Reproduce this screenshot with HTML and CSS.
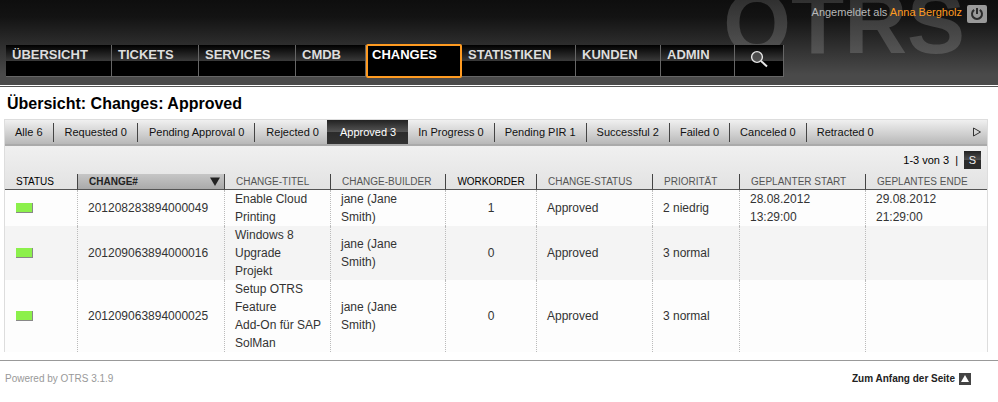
FILE: index.html
```html
<!DOCTYPE html>
<html lang="de">
<head>
<meta charset="utf-8">
<title>Übersicht: Changes: Approved</title>
<link rel="stylesheet" href="styles.css">
</head>
<body>
<header class="header" id="top">
  <div class="logo" aria-hidden="true">OTRS</div>
  <div class="session">
    <span>Angemeldet als <a href="#profile">Anna Bergholz</a></span>
    <a class="logout" href="#logout" aria-label="Abmelden">
      <svg width="14" height="14" viewBox="0 0 14 14" fill="none" stroke="#2b2b2b" stroke-width="2"><path d="M4.200 2.800a5 5 0 1 0 5.600 0M7 1v6"/></svg>
    </a>
  </div>
  <nav class="nav" aria-label="Hauptnavigation">
    <a href="#dashboard">ÜBERSICHT</a>
    <a href="#tickets">TICKETS</a>
    <a href="#services">SERVICES</a>
    <a href="#cmdb">CMDB</a>
    <a href="#changes" class="selected">CHANGES</a>
    <a href="#stats">STATISTIKEN</a>
    <a href="#customers">KUNDEN</a>
    <a href="#admin">ADMIN</a>
    <button type="button" aria-label="Suche">
      <svg width="18" height="18" viewBox="0 0 18 18" fill="none" stroke="#e6e6e6"><circle cx="7" cy="7" r="5.400" stroke-width="1.400" fill="#666" fill-opacity=".6"/><path d="M11 11l6 5.500" stroke-width="2"/></svg>
    </button>
  </nav>
</header>
<main class="content">
  <h1>Übersicht: Changes: Approved</h1>
  <section class="overview">
    <div class="tabs">
      <ul>
        <li><a href="#all">Alle 6</a></li>
        <li><a href="#requested">Requested 0</a></li>
        <li><a href="#pending">Pending Approval 0</a></li>
        <li><a href="#rejected">Rejected 0</a></li>
        <li class="active"><a href="#approved">Approved 3</a></li>
        <li><a href="#progress">In Progress 0</a></li>
        <li><a href="#pir">Pending PIR 1</a></li>
        <li><a href="#successful">Successful 2</a></li>
        <li><a href="#failed">Failed 0</a></li>
        <li><a href="#canceled">Canceled 0</a></li>
        <li><a href="#retracted">Retracted 0</a></li>
      </ul>
      <button class="more" type="button" aria-label="Weitere Filter">
        <svg width="10" height="10" viewBox="0 0 10 10" fill="none" stroke="#333"><path d="M1.500 1v8L8.500 5z"/></svg>
      </button>
    </div>
    <div class="tools">
      <span>1-3 von 3</span><span class="bar">|</span>
      <button type="button" class="size">S</button>
    </div>
    <table>
      <colgroup><col class="c-status"><col class="c-number"><col class="c-title"><col class="c-builder"><col class="c-order"><col class="c-state"><col class="c-prio"><col class="c-start"><col></colgroup>
      <thead>
        <tr>
          <th class="plain">STATUS</th>
          <th class="sorted" aria-sort="descending"><div>CHANGE#<svg width="10" height="9" viewBox="0 0 10 9" fill="#222"><path d="M0 .500h10L5 9z"/></svg></div></th>
          <th>CHANGE-TITEL</th>
          <th>CHANGE-BUILDER</th>
          <th class="plain center">WORKORDER</th>
          <th>CHANGE-STATUS</th>
          <th>PRIORITÄT</th>
          <th>GEPLANTER START</th>
          <th>GEPLANTES ENDE</th>
        </tr>
      </thead>
      <tbody>
        <tr>
          <td><span class="flag"></span></td><td>201208283894000049</td><td>Enable Cloud<br>Printing</td><td>jane (Jane<br>Smith)</td><td class="center">1</td><td>Approved</td><td>2 niedrig</td><td>28.08.2012<br>13:29:00</td><td>29.08.2012<br>21:29:00</td>
        </tr>
        <tr>
          <td><span class="flag"></span></td><td>201209063894000016</td><td>Windows 8<br>Upgrade<br>Projekt</td><td>jane (Jane<br>Smith)</td><td class="center">0</td><td>Approved</td><td>3 normal</td><td></td><td></td>
        </tr>
        <tr>
          <td><span class="flag"></span></td><td>201209063894000025</td><td>Setup OTRS<br>Feature<br>Add-On für SAP<br>SolMan</td><td>jane (Jane<br>Smith)</td><td class="center">0</td><td>Approved</td><td>3 normal</td><td></td><td></td>
        </tr>
      </tbody>
    </table>
  </section>
</main>
<footer class="footer">
  <a class="powered" href="#about">Powered by OTRS 3.1.9</a>
  <a class="totop" href="#top">Zum Anfang der Seite
    <svg width="12" height="12" viewBox="0 0 12 12"><path fill="#444" d="M0 0h12v12H0z"/><path fill="#fff" d="M6 2l4 7H2z"/></svg>
  </a>
</footer>
</body>
</html>
```

FILE: styles.css
```css
* { box-sizing: border-box; }
body {
  margin: 0;
  background: #fff;
  color: #333;
  font: 12px/18px "Liberation Sans", Arial, sans-serif;
}
a { color: inherit; text-decoration: none; }
button { border: 0; padding: 0; font: inherit; cursor: pointer; }
svg { display: block; }

.header {
  position: relative;
  overflow: hidden;
  display: flex;
  flex-direction: column;
  justify-content: space-between;
  height: 85px;
  padding: 4px 11px 8px 6px;
  background: linear-gradient(#0e0e0e, #131313 20%, #4a4a4a 88%);
}
.logo {
  position: absolute;
  top: -24px;
  right: 33px;
  background: linear-gradient(#303030 26%, #565656 84%);
  background-clip: text;
  color: transparent;
  font-size: 87px;
  font-weight: bold;
  line-height: 94px;
}
.session {
  position: relative;
  display: flex;
  justify-content: flex-end;
  gap: 5px;
  color: #b8b8b8;
  font-size: 11px;
  line-height: 16px;
}
.session span a { color: #ff9b21; }
.logout {
  display: grid;
  place-items: center;
  width: 20px;
  height: 18px;
  margin-top: 1px;
  border-radius: 2px;
  background: #999;
}
.nav {
  position: relative;
  display: grid;
  grid-template-columns: 106px 87px 97px 70px 96px 114px 85px 74px 49px;
  height: 32px;
}
.nav > * {
  padding: 1px 6px;
  border: solid #666;
  border-width: 0 1px 1px 0;
  background: linear-gradient(#000, #3a3a3a) 0 0 / 100% 16px no-repeat #000;
  color: #ddd;
  font-size: 13px;
  font-weight: bold;
}
.nav .selected {
  margin: -1px 0;
  padding: 0 4px;
  border: 2px solid #ff9b21;
  border-radius: 2px;
  background: #000;
  color: #fff;
}
.nav button { display: grid; justify-content: center; padding-top: 5px; align-content: start; }

.content {
  margin-top: 1px;
  padding: 0 10px 8px 4px;
  border-top: 1px solid #555;
}
h1 {
  margin: 0;
  padding: 7px 3px 5px;
  color: #000;
  font-size: 16px;
  line-height: 20px;
}
.overview {
  border: 1px solid #ddd;
  border-bottom: 0;
  background: linear-gradient(#f0f0f0, #e2e2e2) 0 26px / 100% 44px no-repeat;
}
.tabs {
  display: flex;
  justify-content: space-between;
  height: 26px;
  border-bottom: 2px solid #aaa;
  background: linear-gradient(#f0f0f0, #b8b8b8);
  color: #111;
  font-size: 11px;
}
.tabs ul { display: flex; margin: 0; padding: 0; list-style: none; }
.tabs li { display: flex; align-items: center; }
.tabs li a { padding: 0 10px; white-space: nowrap; }
.tabs li:not(.active) + li a { padding-left: 11px; }
.tabs .active ~ li + li a { padding-left: 10px; }
.tabs li:not(.active) + li:not(.active)::before {
  content: "";
  width: 1px;
  height: 19px;
  background: #444;
}
.tabs .active {
  margin-left: -2px;
  padding: 0 2px;
  background: linear-gradient(#222, #555 49%, #2b2b2b 50%, #333);
  color: #fff;
}
.more { display: grid; place-items: center; width: 20px; background: none; }
.tools {
  display: flex;
  justify-content: flex-end;
  align-items: center;
  gap: 6px;
  height: 28px;
  padding-right: 6px;
  color: #000;
  font-size: 11px;
}
.size {
  width: 17px;
  height: 18px;
  background: linear-gradient(#222, #505050 49%, #2b2b2b 50%);
  color: #eee;
}

table { width: 100%; border-collapse: separate; border-spacing: 0; table-layout: fixed; }
.c-status { width: 72px; }
.c-number { width: 147px; }
.c-title { width: 106px; }
.c-builder { width: 115px; }
.c-order { width: 91px; }
.c-state { width: 116px; }
.c-prio { width: 87px; }
.c-start { width: 126px; }
th {
  height: 16px;
  padding: 0 0 0 11px;
  border-bottom: 1px solid #555;
  border-left: 1px solid #444;
  color: #555;
  font-size: 10px;
  font-weight: normal;
  line-height: 15px;
  text-align: left;
  white-space: nowrap;
}
th:first-child { border-left: 0; }
th.plain { color: #000; }
.sorted { background: linear-gradient(#c6c6c6, #aaa); color: #222; font-weight: bold; }
.sorted div { display: flex; justify-content: space-between; align-items: center; padding-right: 4px; }
td {
  padding: 0 0 0 10px;
  border-left: 1px dotted #bbb;
  background: #fdfdfd;
  vertical-align: middle;
  white-space: nowrap;
}
td:first-child { padding-left: 11px; border-left: 0; }
th.center, td.center { padding: 0; text-align: center; }
tr:nth-child(even) td { background: #f4f4f4; }
.flag {
  display: block;
  width: 17px;
  height: 10px;
  border: solid #888;
  border-width: 0 1px 1px 0;
  background: #8cf04b;
}

.footer {
  display: flex;
  justify-content: space-between;
  padding: 9px 27px 0 5px;
  border-top: 1px solid #999;
  font-size: 10px;
}
.powered { color: #999; }
.totop { display: flex; align-items: center; gap: 4px; color: #222; font-weight: bold; }
```
